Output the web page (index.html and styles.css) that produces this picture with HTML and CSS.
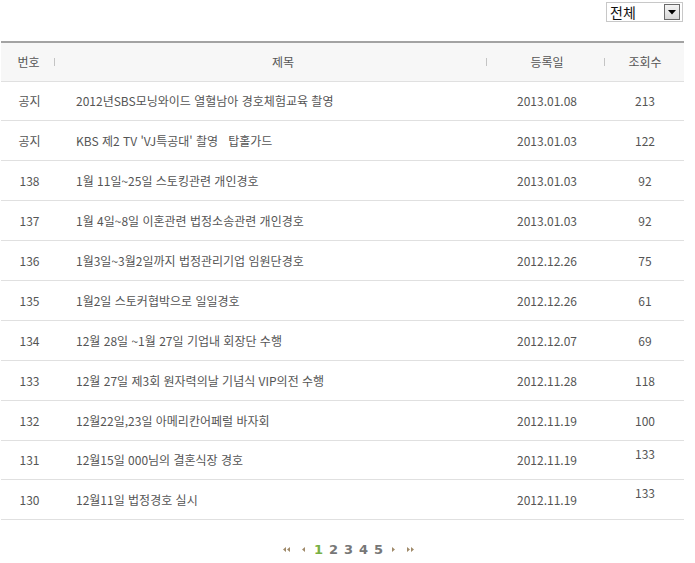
FILE: index.html
```html
<!DOCTYPE html>
<html lang="ko">
<head>
<meta charset="utf-8">
<link rel="stylesheet" href="styles.css">
</head>
<body>
<div class="wrap">
  <div class="filter">
    <div class="select">
      <span class="select-text">전체</span>
      <span class="select-btn"><svg width="8" height="5" viewBox="0 0 8 5"><path d="M0 0H8L4 4.5Z" fill="#000"/></svg></span>
    </div>
  </div>
  <table class="board">
    <colgroup>
      <col class="w-no"><col class="w-title"><col class="w-date"><col class="w-hit">
    </colgroup>
    <thead>
      <tr>
        <th class="c-no sep">번호</th>
        <th class="c-title sep">제목</th>
        <th class="c-date sep">등록일</th>
        <th class="c-hit">조회수</th>
      </tr>
    </thead>
    <tbody>
      <tr><td class="c-no">공지</td><td class="c-title">2012년SBS모닝와이드 열혈남아 경호체험교육 촬영</td><td class="c-date">2013.01.08</td><td class="c-hit">213</td></tr>
      <tr><td class="c-no">공지</td><td class="c-title">KBS 제2 TV 'VJ특공대' 촬영&nbsp;&nbsp; 탑홀가드</td><td class="c-date">2013.01.03</td><td class="c-hit">122</td></tr>
      <tr><td class="c-no">138</td><td class="c-title">1월 11일~25일 스토킹관련 개인경호</td><td class="c-date">2013.01.03</td><td class="c-hit">92</td></tr>
      <tr><td class="c-no">137</td><td class="c-title">1월 4일~8일 이혼관련 법정소송관련 개인경호</td><td class="c-date">2013.01.03</td><td class="c-hit">92</td></tr>
      <tr><td class="c-no">136</td><td class="c-title">1월3일~3월2일까지 법정관리기업 임원단경호</td><td class="c-date">2012.12.26</td><td class="c-hit">75</td></tr>
      <tr><td class="c-no">135</td><td class="c-title">1월2일 스토커협박으로 일일경호</td><td class="c-date">2012.12.26</td><td class="c-hit">61</td></tr>
      <tr><td class="c-no">134</td><td class="c-title">12월 28일 ~1월 27일 기업내 회장단 수행</td><td class="c-date">2012.12.07</td><td class="c-hit">69</td></tr>
      <tr><td class="c-no">133</td><td class="c-title">12월 27일 제3회 원자력의날 기념식 VIP의전 수행</td><td class="c-date">2012.11.28</td><td class="c-hit">118</td></tr>
      <tr><td class="c-no">132</td><td class="c-title">12월22일,23일 아메리칸어페럴 바자회</td><td class="c-date">2012.11.19</td><td class="c-hit">100</td></tr>
      <tr><td class="c-no">131</td><td class="c-title">12월15일 000님의 결혼식장 경호</td><td class="c-date">2012.11.19</td><td class="c-hit top">133</td></tr>
      <tr><td class="c-no">130</td><td class="c-title">12월11일 법정경호 실시</td><td class="c-date">2012.11.19</td><td class="c-hit top">133</td></tr>
    </tbody>
  </table>
  <div class="paging">
    <span class="arr"><svg width="7" height="5" viewBox="0 0 7 5"><path d="M3 0V5L0 2.5Z M7 0V5L4 2.5Z" fill="#a08a6a"/></svg></span>
    <span class="arr"><svg width="3" height="5" viewBox="0 0 3 5"><path d="M3 0V5L0 2.5Z" fill="#a08a6a"/></svg></span>
    <span class="num on">1</span>
    <span class="num">2</span>
    <span class="num">3</span>
    <span class="num">4</span>
    <span class="num">5</span>
    <span class="arr"><svg width="3" height="5" viewBox="0 0 3 5"><path d="M0 0V5L3 2.5Z" fill="#a08a6a"/></svg></span>
    <span class="arr"><svg width="7" height="5" viewBox="0 0 7 5"><path d="M0 0V5L3 2.5Z M4 0V5L7 2.5Z" fill="#a08a6a"/></svg></span>
  </div>
</div>
</body>
</html>
```

FILE: styles.css
```css
html, body {
  margin: 0;
  padding: 0;
  background: #fff;
}
body {
  font-family: "Noto Sans CJK KR", "Liberation Sans", sans-serif;
  font-size: 12px;
  color: #555;
}
.wrap {
  width: 683px;
  padding: 2px 0 0 1px;
}
.filter {
  display: flex;
  justify-content: flex-end;
  padding-right: 1px;
  height: 20px;
  margin-bottom: 19px;
}
.select {
  width: 75px;
  height: 18px;
  border: 1px solid #c8c8c8;
  display: flex;
  align-items: center;
  justify-content: space-between;
  background: #fff;
}
.select-text {
  font-size: 14px;
  color: #111;
  padding-left: 3px;
  line-height: 18px;
}
.select-btn {
  width: 14px;
  height: 14px;
  margin-right: 2px;
  border: 1px solid #6a6a6a;
  background: linear-gradient(#f4f4f4, #d8d8d8);
  display: flex;
  align-items: center;
  justify-content: center;
}
.board {
  width: 683px;
  border-collapse: collapse;
  table-layout: fixed;
  border-top: 2px solid #a3a3a3;
}
.w-no { width: 55px; }
.w-title { width: 432px; }
.w-date { width: 118px; }
.w-hit { width: 78px; }
.board th,
.board td {
  box-sizing: border-box;
  padding: 0;
}
.board th {
  height: 39px;
  font-weight: normal;
  color: #555;
  background-color: #f7f7f7;
  border-bottom: 1px solid #e0e0e0;
  font-size: 12px;
}
.board th.sep {
  background-image: linear-gradient(#c4c4c4, #c4c4c4);
  background-repeat: no-repeat;
  background-position: right 1px center;
  background-size: 1px 8px;
}
.board td {
  height: 39.9px;
  border-bottom: 1px solid #e0e0e0;
  color: #555;
  font-size: 12px;
  white-space: nowrap;
}
.c-no, .c-date, .c-hit { text-align: center; }
td.c-no { padding-left: 2px; }
td.c-title { padding-left: 20px; text-align: left; }
th.c-title { text-align: center; padding-left: 22px; }
td.c-hit.top {
  vertical-align: top;
  padding-top: 4px;
}
.paging {
  display: flex;
  justify-content: center;
  align-items: center;
  gap: 6px;
  margin-top: 19px;
  padding-left: 12px;
  height: 20px;
  font-family: "DejaVu Sans", sans-serif;
}
.arr {
  display: flex;
  align-items: center;
  margin: 0 3px;
}
.num {
  color: #777;
  font-size: 13px;
  font-weight: bold;
}
.num.on {
  color: #78b043;
}
```
